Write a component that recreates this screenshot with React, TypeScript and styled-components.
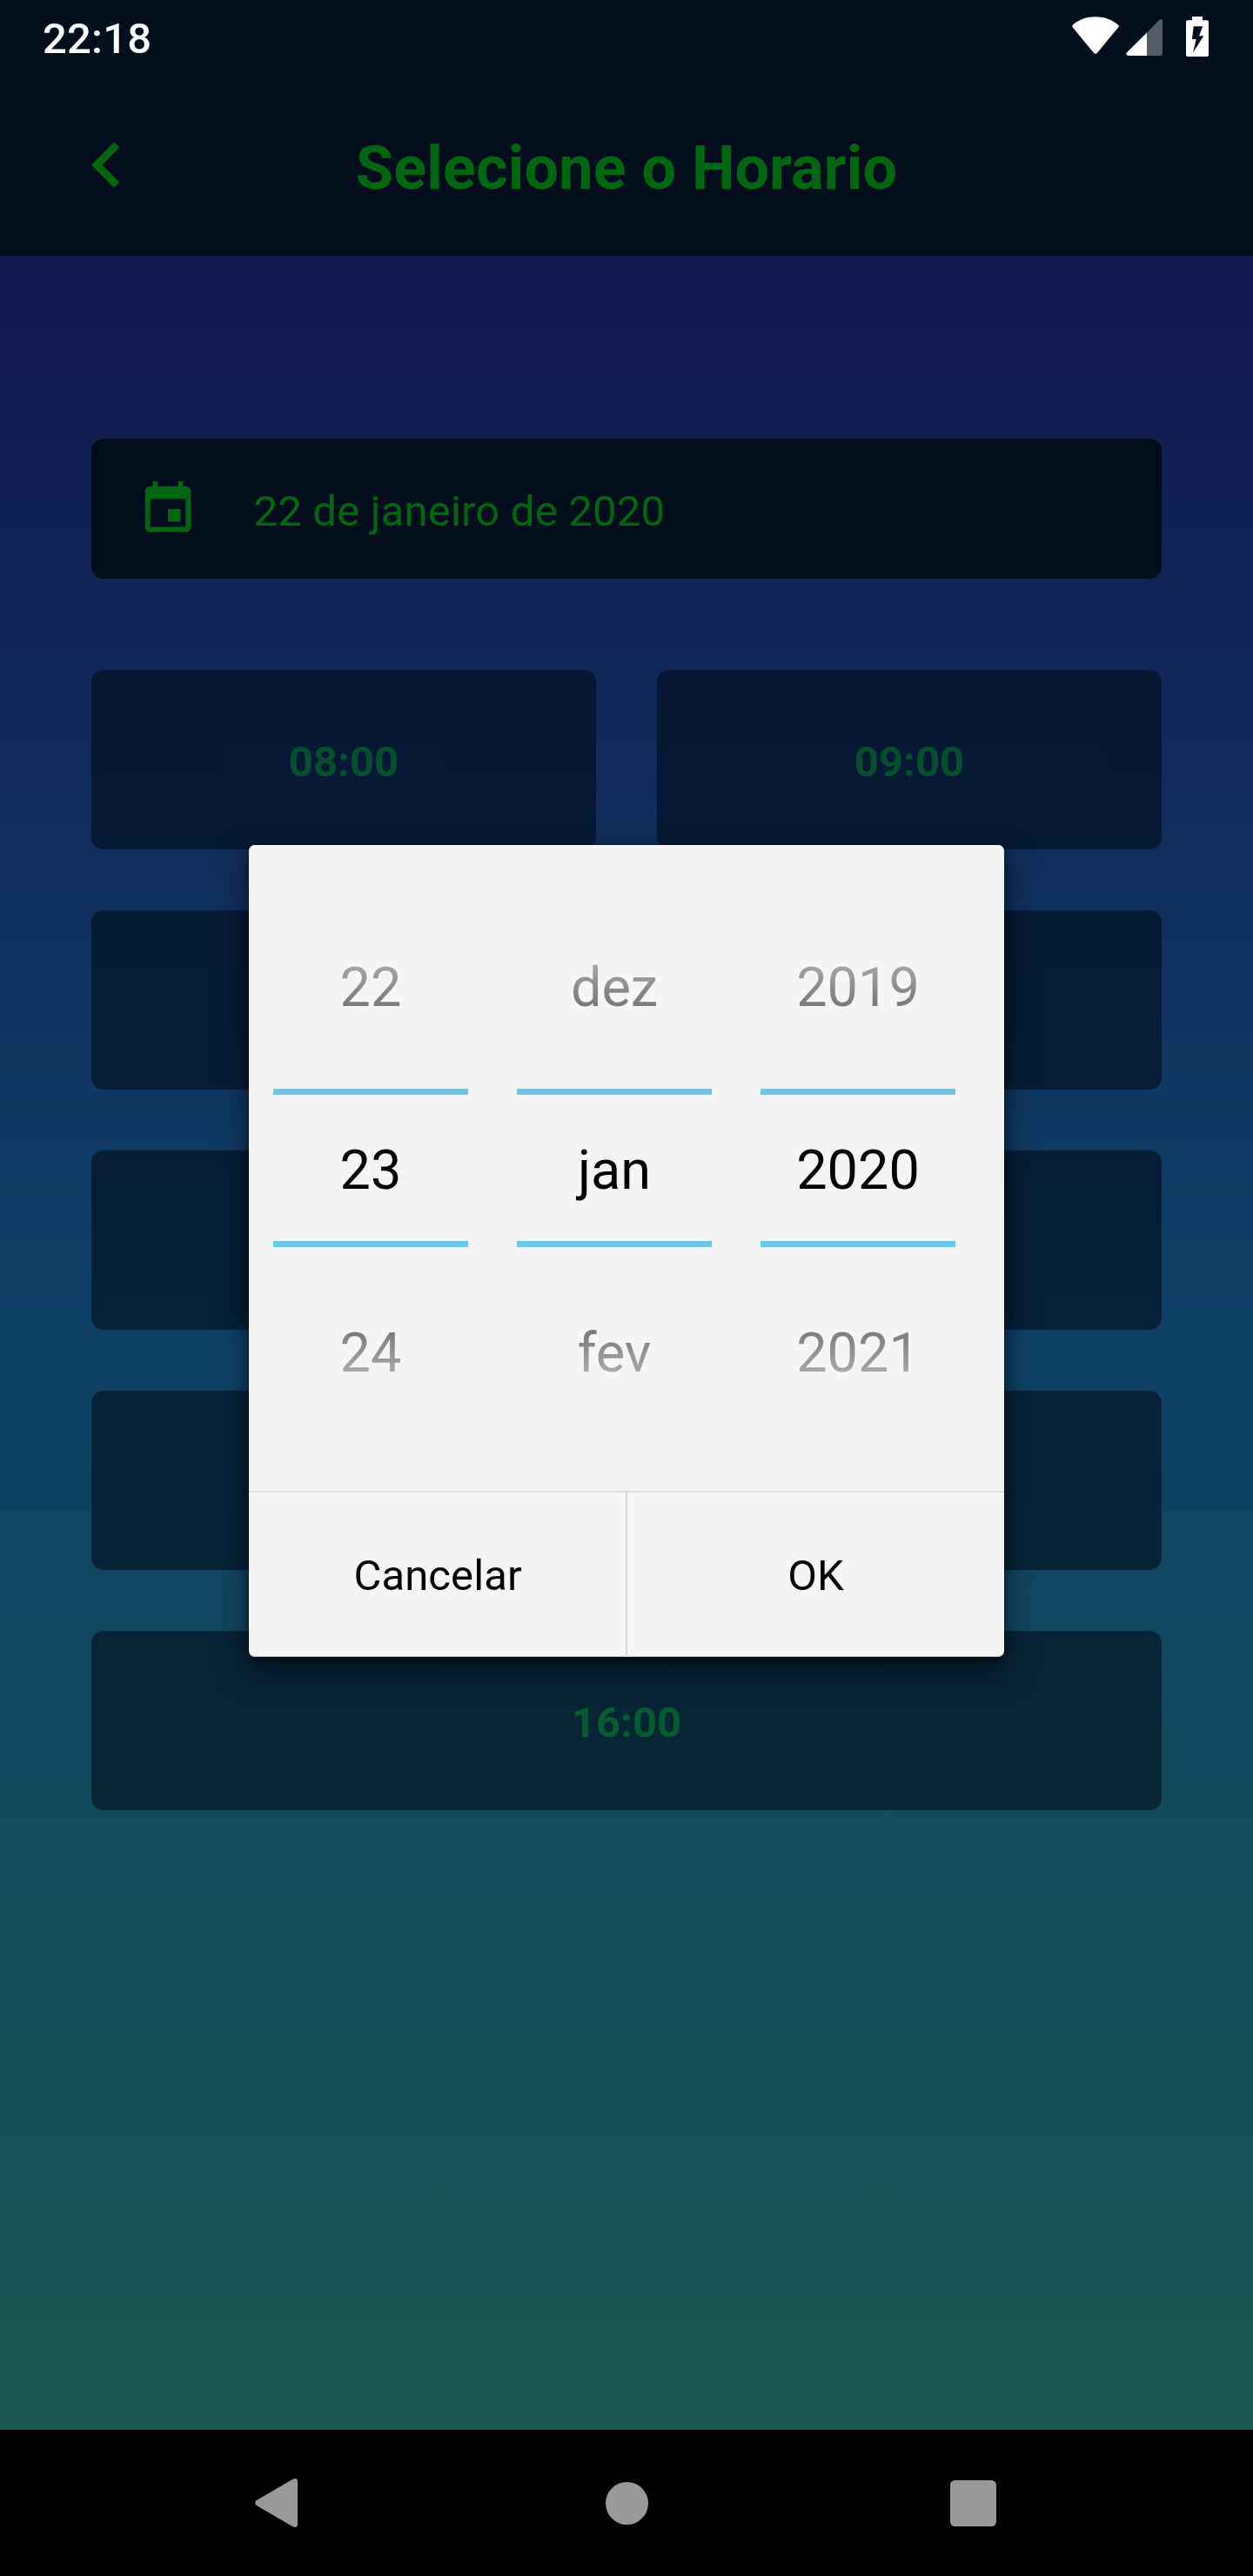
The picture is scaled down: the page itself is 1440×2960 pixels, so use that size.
import React from "react";
import styled, { createGlobalStyle } from "styled-components";

const GlobalStyle = createGlobalStyle`
  *, *::before, *::after { box-sizing: border-box; }
  html, body { margin: 0; padding: 0; background: #000; }
  body { font-family: Roboto, "Noto Sans", sans-serif; }
`;

const colors = {
  surface: "#020e1c",
  accent: "#006611",
  dialog: "#f5f5f5",
  divider: "#dcdcdc",
  picker: "#6bc7e8",
  nav: "#999999",
};

const Screen = styled.div`
  position: relative;
  display: flex;
  flex-direction: column;
  width: 1440px;
  height: 2960px;
  overflow: hidden;
`;

const StatusBar = styled.div`
  display: flex;
  justify-content: space-between;
  align-items: flex-start;
  height: 84px;
  padding: 0 51px 0 49px;
  background: ${colors.surface};
`;

const Clock = styled.span`
  padding-top: 16px;
  font-size: 49px;
  line-height: 58px;
  font-weight: 500;
  letter-spacing: 0.2px;
  color: #fff;
`;

const StatusIcons = styled.div`
  display: flex;
  padding-top: 19px;

  svg {
    display: block;
  }

  svg + svg {
    margin-left: 8px;
  }

  svg:last-child {
    margin-left: 27px;
  }
`;

const Header = styled.header`
  display: grid;
  grid-template-columns: 105px 1fr 105px;
  align-items: center;
  height: 210px;
  padding: 0 70px;
  background: ${colors.surface};
`;

const BackButton = styled.button`
  width: 105px;
  height: 105px;
  padding: 0;
  border: 0;
  background: none;
  color: ${colors.accent};

  svg {
    display: block;
  }
`;

const Title = styled.h1`
  margin: 0;
  padding-top: 7px;
  text-align: center;
  font-size: 70px;
  line-height: 82px;
  font-weight: 700;
  letter-spacing: 0.25px;
  color: ${colors.accent};
`;

const Content = styled.main`
  flex: 1;
  padding: 210px 105px 0;
  background: linear-gradient(#12174e 0%, #0e4066 50%, #1c5852 100%);
`;

const DateField = styled.div`
  display: flex;
  align-items: center;
  height: 161px;
  padding: 0 52.5px;
  border-radius: 14px;
  background: ${colors.surface};
  color: ${colors.accent};

  svg {
    display: block;
  }
`;

const DateText = styled.span`
  padding: 6px 0 0 64px;
  font-size: 49px;
  line-height: 58px;
  letter-spacing: 0.2px;
`;

const SlotGrid = styled.div`
  display: grid;
  grid-template-columns: 1fr 1fr;
  grid-auto-rows: 206px;
  gap: 70px;
  margin-top: 105px;
`;

const Slot = styled.button<{ $wide?: boolean }>`
  grid-column: ${(p) => (p.$wide ? "1 / -1" : "auto")};
  display: flex;
  align-items: center;
  justify-content: center;
  padding: 5px 0 0;
  border: 0;
  border-radius: 14px;
  background: ${colors.surface};
  opacity: 0.6;
  font-family: inherit;
  font-size: 49px;
  line-height: 58px;
  font-weight: 700;
  color: ${colors.accent};
`;

const NavBar = styled.nav`
  display: grid;
  grid-template-columns: repeat(3, 398px);
  justify-content: center;
  height: 168px;
  background: #000;
`;

const NavKey = styled.button`
  display: flex;
  align-items: center;
  justify-content: center;
  padding: 0;
  border: 0;
  background: none;
  color: ${colors.nav};
`;

const Overlay = styled.div`
  position: absolute;
  inset: 84px 0 169px;
  display: flex;
  align-items: center;
  justify-content: center;
`;

const Dialog = styled.div`
  display: flex;
  flex-direction: column;
  width: 868px;
  height: 933px;
  border-radius: 7px;
  background: ${colors.dialog};
  box-shadow:
    inset 0 1px 0 #fff,
    inset 0 -1px 0 rgba(0, 0, 0, 0.25),
    0 14px 36px rgba(0, 0, 0, 0.5),
    0 3px 12px rgba(0, 0, 0, 0.4);
`;

const Pickers = styled.div`
  display: flex;
  gap: 56px;
  height: 742px;
  padding: 56px 28px;
`;

const Wheel = styled.div`
  display: flex;
  flex-direction: column;
  width: 224px;
  font-size: 63px;
  line-height: 74px;
  text-align: center;
  color: #000;
`;

const WheelPrevious = styled.div`
  height: 224px;
  padding-top: 71px;
  mask-image: linear-gradient(rgba(0, 0, 0, 0), rgba(0, 0, 0, 0.88));
`;

const WheelCurrent = styled.div`
  height: 182px;
  padding-top: 50px;
  border-top: 7px solid ${colors.picker};
  border-bottom: 7px solid ${colors.picker};
`;

const WheelNext = styled.div`
  height: 224px;
  padding-top: 85px;
  mask-image: linear-gradient(rgba(0, 0, 0, 0.88), rgba(0, 0, 0, 0));
`;

const Actions = styled.div`
  display: grid;
  grid-template-columns: 1fr 1fr;
  height: 191px;
  border-top: 2px solid ${colors.divider};
`;

const ActionButton = styled.button`
  padding: 3px 0 0;
  border: 0;
  background: none;
  font-family: inherit;
  font-size: 49px;
  line-height: 58px;
  letter-spacing: 0.1px;
  color: #000;

  & + & {
    margin-left: -1px;
    border-left: 2px solid ${colors.divider};
  }
`;

const slots = ["08:00", "09:00", "", "", "", "", "", "", "16:00"];

const wheels = [
  ["22", "23", "24"],
  ["dez", "jan", "fev"],
  ["2019", "2020", "2021"],
];

const WifiIcon = () => (
  <svg width="54" height="44" viewBox="0 0 54 44" fill="#fff">
    <path d="M1 9.5C8 3.500 17 .3 27 .3S46 3.500 53 9.500Q54.500 11 53 12.700L29 41.700Q27 43.800 25 41.700L1 12.700Q-.5 11 1 9.500Z" />
  </svg>
);

const SignalIcon = () => (
  <svg width="42" height="46" viewBox="0 0 42 46" fill="#fff">
    <path d="M24 18.500V45H3Q-1 44.500 .8 41.500Z" />
    <path d="M24 18.500L38.500 3.700Q42 1.800 42 5.500V42.500Q42 45 39.500 45H24Z" opacity=".32" />
  </svg>
);

const BatteryIcon = () => (
  <svg width="26" height="46" viewBox="0 0 26 46" fill="#fff">
    <path
      fillRule="evenodd"
      d="M7 0H19V4.300H24Q26 4.300 26 6.300V44Q26 46 24 46H2Q0 46 0 44V6.300Q0 4.300 2 4.300H7ZM8.700 11.300L7 26H11.700L8 41.500L20.300 22.300H15L19.300 11.300Z"
    />
  </svg>
);

const ChevronLeftIcon = () => (
  <svg width="105" height="105" viewBox="0 0 24 24" fill="currentColor">
    <path d="M15.410 7.410L14 6l-6 6 6 6 1.410-1.410L10.830 12z" />
  </svg>
);

const EventIcon = () => (
  <svg width="70" height="70" viewBox="0 0 24 24" fill="currentColor">
    <path d="M17 12h-5v5h5v-5zM16 1v2H8V1H6v2H5c-1.110 0-1.990.9-1.990 2L3 19c0 1.100.89 2 2 2h14c1.100 0 2-.9 2-2V5c0-1.100-.9-2-2-2h-1V1h-2zm3 18H5V8h14v11z" />
  </svg>
);

const NavBackIcon = () => (
  <svg width="58" height="56" viewBox="0 0 58 56" fill="currentColor">
    <path d="M1.500 25.300L43.500.8Q49-1.500 49 4V52Q49 57.500 43.500 55.200L1.500 30.700Q-1 28 1.500 25.300Z" />
  </svg>
);

const NavHomeIcon = () => (
  <svg width="49" height="49" viewBox="0 0 49 49" fill="currentColor">
    <circle cx="24.500" cy="24.500" r="24.500" />
  </svg>
);

const NavRecentIcon = () => (
  <svg width="53" height="53" viewBox="0 0 53 53" fill="currentColor">
    <rect width="53" height="53" rx="5.500" />
  </svg>
);

export default function App() {
  return (
    <Screen>
      <GlobalStyle />
      <StatusBar>
        <Clock>22:18</Clock>
        <StatusIcons>
          <WifiIcon />
          <SignalIcon />
          <BatteryIcon />
        </StatusIcons>
      </StatusBar>
      <Header>
        <BackButton>
          <ChevronLeftIcon />
        </BackButton>
        <Title>Selecione o Horario</Title>
      </Header>
      <Content>
        <DateField>
          <EventIcon />
          <DateText>22 de janeiro de 2020</DateText>
        </DateField>
        <SlotGrid>
          {slots.map((time, i) => (
            <Slot key={i} $wide={i === slots.length - 1}>
              {time}
            </Slot>
          ))}
        </SlotGrid>
      </Content>
      <NavBar>
        <NavKey>
          <NavBackIcon />
        </NavKey>
        <NavKey>
          <NavHomeIcon />
        </NavKey>
        <NavKey>
          <NavRecentIcon />
        </NavKey>
      </NavBar>
      <Overlay>
        <Dialog>
          <Pickers>
            {wheels.map(([previous, current, next]) => (
              <Wheel key={current}>
                <WheelPrevious>{previous}</WheelPrevious>
                <WheelCurrent>{current}</WheelCurrent>
                <WheelNext>{next}</WheelNext>
              </Wheel>
            ))}
          </Pickers>
          <Actions>
            <ActionButton>Cancelar</ActionButton>
            <ActionButton>OK</ActionButton>
          </Actions>
        </Dialog>
      </Overlay>
    </Screen>
  );
}
